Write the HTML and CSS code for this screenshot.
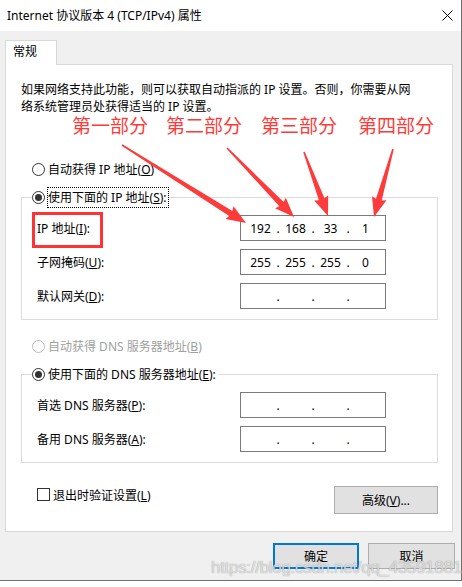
FILE: index.html
```html
<!DOCTYPE html>
<html lang="zh-CN">
<head>
    <meta charset="UTF-8">
    <meta name="viewport" content="width=device-width, initial-scale=1.0">
    <title>Internet 协议版本 4 (TCP/IPv4) 属性</title>
    <link rel="stylesheet" href="styles.css">
</head>
<body>
    <div class="window">
        <div class="titlebar">
            <span class="title">Internet 协议版本 4 (TCP/IPv4) 属性</span>
            <svg class="close" width="11" height="11" viewBox="0 0 11 11">
                <path d="M0.5 0.5L10.5 10.5M10.5 0.5L0.5 10.5" stroke="#000" stroke-width="1" fill="none"/>
            </svg>
        </div>

        <div class="tabs">
            <div class="tab">常规</div>
        </div>

        <div class="panel">
            <p class="desc">如果网络支持此功能，则可以获取自动指派的 IP 设置。否则，你需要从网<br>络系统管理员处获得适当的 IP 设置。</p>

            <div class="radio-row first">
                <span class="radio"></span>
                <span>自动获得 IP 地址(<u>O</u>)</span>
            </div>

            <fieldset class="group">
                <legend>
                    <div class="legend-row">
                        <span class="radio checked"></span>
                        <span class="focus">使用下面的 IP 地址(<u>S</u>):</span>
                    </div>
                </legend>
                <div class="field-row">
                    <span class="field-label">IP 地址(<u>I</u>):</span>
                    <div class="ip">
                        <span class="oct">192</span><span class="dot">.</span>
                        <span class="oct">168</span><span class="dot">.</span>
                        <span class="oct">33</span><span class="dot">.</span>
                        <span class="oct">1</span>
                    </div>
                </div>
                <div class="field-row">
                    <span class="field-label">子网掩码(<u>U</u>):</span>
                    <div class="ip">
                        <span class="oct">255</span><span class="dot">.</span>
                        <span class="oct">255</span><span class="dot">.</span>
                        <span class="oct">255</span><span class="dot">.</span>
                        <span class="oct">0</span>
                    </div>
                </div>
                <div class="field-row">
                    <span class="field-label">默认网关(<u>D</u>):</span>
                    <div class="ip">
                        <span class="oct"></span><span class="dot">.</span>
                        <span class="oct"></span><span class="dot">.</span>
                        <span class="oct"></span><span class="dot">.</span>
                        <span class="oct"></span>
                    </div>
                </div>
            </fieldset>

            <div class="radio-row second disabled">
                <span class="radio"></span>
                <span>自动获得 DNS 服务器地址(<u>B</u>)</span>
            </div>

            <fieldset class="group">
                <legend>
                    <div class="legend-row">
                        <span class="radio checked"></span>
                        <span class="focus no-focus">使用下面的 DNS 服务器地址(<u>E</u>):</span>
                    </div>
                </legend>
                <div class="field-row">
                    <span class="field-label">首选 DNS 服务器(<u>P</u>):</span>
                    <div class="ip">
                        <span class="oct"></span><span class="dot">.</span>
                        <span class="oct"></span><span class="dot">.</span>
                        <span class="oct"></span><span class="dot">.</span>
                        <span class="oct"></span>
                    </div>
                </div>
                <div class="field-row">
                    <span class="field-label">备用 DNS 服务器(<u>A</u>):</span>
                    <div class="ip">
                        <span class="oct"></span><span class="dot">.</span>
                        <span class="oct"></span><span class="dot">.</span>
                        <span class="oct"></span><span class="dot">.</span>
                        <span class="oct"></span>
                    </div>
                </div>
            </fieldset>

            <div class="bottom-row">
                <div class="check-row">
                    <span class="check-box"></span>
                    <span>退出时验证设置(<u>L</u>)</span>
                </div>
                <button class="btn advanced">高级(<u>V</u>)...</button>
            </div>
        </div>

        <div class="footer">
            <button class="btn primary">确定</button>
            <button class="btn">取消</button>
        </div>

        <!-- red annotations drawn over the dialog -->
        <div class="annotations">
            <svg class="arrows" width="462" height="587" viewBox="0 0 462 587">
                <g fill="#fe3b3b">
                    <polygon transform="translate(122 145) rotate(32.17)" points="0,-0.8 128.5,-3 127,-7.5 146.5,0 127,7.5 128.5,3 0,0.8"/>
                    <polygon transform="translate(227 148) rotate(45.83)" points="0,-0.8 78.2,-3 76.7,-7.5 96.2,0 76.7,7.5 78.2,3 0,0.8"/>
                    <polygon transform="translate(304 152) rotate(69.44)" points="0,-0.8 50.4,-3 48.9,-7.5 68.4,0 48.9,7.5 50.4,3 0,0.8"/>
                    <polygon transform="translate(393 149) rotate(105.61)" points="0,-0.8 52.6,-3 51.1,-7.5 70.6,0 51.1,7.5 52.6,3 0,0.8"/>
                </g>
            </svg>
            <span class="tag" style="left: 72px">第一部分</span>
            <span class="tag" style="left: 166px">第二部分</span>
            <span class="tag" style="left: 261px">第三部分</span>
            <span class="tag" style="left: 358px">第四部分</span>
            <span class="ip-mark"></span>
            <span class="watermark">https://blog.csdn.net/qq_43591881</span>
        </div>
    </div>
</body>
</html>
```

FILE: styles.css
```css
* {
    box-sizing: border-box;
}

body {
    margin: 0;
    background: #fff;
    font-family: "Noto Sans", "Noto Sans CJK SC", sans-serif;
    font-size: 12px;
    color: #000;
}

u {
    text-decoration: underline;
    text-underline-offset: 1px;
}

.window {
    position: relative;
    width: 462px;
    height: 581px;
    background: #f0f0f0;
    border-right: 1px solid #707070;
    border-bottom: 1px solid #707070;
}

.titlebar {
    height: 31px;
    background: #fff;
    display: flex;
    align-items: center;
    justify-content: space-between;
    padding: 0 8px 0 7px;
}

.title {
    line-height: 16px;
}

.tabs {
    display: flex;
    padding: 9px 0 0 5px;
}

.tab {
    position: relative;
    z-index: 1;
    width: 52px;
    height: 25px;
    margin-bottom: -1px;
    padding-left: 7px;
    line-height: 22px;
    background: #fff;
    border: 1px solid #d9d9d9;
    border-bottom: none;
}

.panel {
    margin-left: 5px;
    width: 448px;
    height: 468px;
    padding: 16px 14px 0 15px;
    background: #fff;
    border: 1px solid #d9d9d9;
}

.desc {
    margin: 0;
    line-height: 17px;
    white-space: nowrap;
}

.radio-row {
    display: flex;
    align-items: center;
    gap: 3px;
    height: 17px;
    line-height: 17px;
    margin-left: 11px;
    white-space: nowrap;
}

.radio-row.first {
    margin-top: 46px;
}

.radio-row.second {
    margin-top: 18px;
}

.radio {
    position: relative;
    flex: none;
    width: 13px;
    height: 13px;
    background: #fff;
    border: 1px solid #333;
    border-radius: 50%;
}

.radio.checked::after {
    content: "";
    position: absolute;
    left: 2px;
    top: 2px;
    width: 7px;
    height: 7px;
    border-radius: 50%;
    background: #333;
}

.disabled {
    color: #a0a0a0;
}

.disabled .radio {
    border-color: #bcbcbc;
}

.group {
    margin: 9px 0 0;
    padding: 7px 0 10px;
    min-width: 0;
    border: 1px solid #dcdcdc;
}

.group legend {
    margin-left: 10px;
    padding: 0;
}

.legend-row {
    display: flex;
    align-items: center;
    gap: 2px;
    height: 21px;
    white-space: nowrap;
}

.focus {
    line-height: 19px;
    padding-right: 1px;
    border: 1px dotted #000;
}

.focus.no-focus {
    border-color: transparent;
}

.field-row {
    display: flex;
    align-items: center;
    height: 26px;
    padding-left: 15px;
}

.field-row + .field-row {
    margin-top: 8px;
}

.field-label {
    width: 203px;
    white-space: nowrap;
}

.ip {
    display: flex;
    align-items: center;
    width: 146px;
    height: 26px;
    padding-left: 5px;
    background: #fff;
    border: 1px solid #7a7a7a;
}

.oct {
    width: 29px;
    text-align: center;
}

.dot {
    width: 6px;
    text-align: center;
}

.bottom-row {
    display: flex;
    justify-content: space-between;
    align-items: flex-start;
    margin-top: 23px;
}

.check-row {
    display: flex;
    align-items: center;
    gap: 3px;
    height: 17px;
    margin-left: 16px;
}

.check-box {
    width: 13px;
    height: 13px;
    background: #fff;
    border: 1px solid #333;
}

.btn {
    font: inherit;
    color: #000;
    background: #e1e1e1;
    border: 1px solid #adadad;
    padding: 0;
    width: 87px;
    height: 26px;
}

.btn.advanced {
    width: 104px;
    height: 28px;
}

.btn.primary {
    width: 86px;
    border: 2px solid #0078d7;
}

.footer {
    display: flex;
    justify-content: flex-end;
    gap: 9px;
    padding: 11px 6px 0 0;
}

.annotations {
    position: absolute;
    left: 0;
    top: 0;
    width: 462px;
    height: 587px;
    pointer-events: none;
}

.arrows {
    position: absolute;
    left: 0;
    top: 0;
}

.tag {
    position: absolute;
    top: 116px;
    font-family: "Noto Sans CJK SC", sans-serif;
    font-size: 19px;
    line-height: 18px;
    color: #fe3b3b;
    white-space: nowrap;
}

.ip-mark {
    position: absolute;
    left: 32px;
    top: 212px;
    width: 71px;
    height: 36px;
    border: 3px solid #f33;
}

.watermark {
    position: absolute;
    left: 211px;
    top: 558px;
    font-family: "Liberation Sans", sans-serif;
    font-size: 17px;
    letter-spacing: -0.3px;
    color: rgba(255, 255, 255, 0.7);
    text-shadow: 0 0 1px rgba(80, 80, 80, 0.7);
    white-space: nowrap;
}
```
